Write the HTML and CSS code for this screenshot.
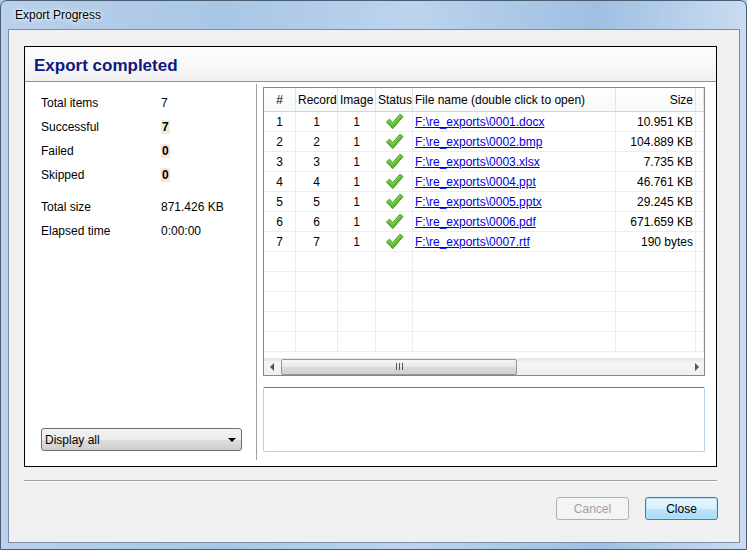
FILE: index.html
```html
<!DOCTYPE html>
<html>
<head>
  <title>Export Progress</title>
  <meta charset="utf-8">
  <link rel="stylesheet" href="styles.css">
</head>
<body>
  <div class="window">
    <div class="titlebar">Export Progress</div>
    <div class="client">
      <div class="panel">
        <div class="panel-header">Export completed</div>
        <div class="panel-body">
          <div class="summary">
            <div class="stats">
              <div class="stat"><span class="label">Total items</span><span class="value">7</span></div>
              <div class="stat"><span class="label">Successful</span><span class="value"><b class="ok">7</b></span></div>
              <div class="stat"><span class="label">Failed</span><span class="value"><b class="bad">0</b></span></div>
              <div class="stat"><span class="label">Skipped</span><span class="value"><b class="bad">0</b></span></div>
              <div class="stat gap"><span class="label">Total size</span><span class="value">871.426 KB</span></div>
              <div class="stat"><span class="label">Elapsed time</span><span class="value">0:00:00</span></div>
            </div>
            <div class="select">
              <span>Display all</span>
              <span class="select-arrow"></span>
            </div>
          </div>
          <div class="divider"></div>
          <div class="results">
            <div class="grid">
              <div class="grid-rows" id="rows">
                <div class="row head">
                  <div class="cell c">#</div>
                  <div class="cell c">Record</div>
                  <div class="cell c">Image</div>
                  <div class="cell c">Status</div>
                  <div class="cell">File name (double click to open)</div>
                  <div class="cell r">Size</div>
                  <div class="cell"></div>
                </div>
              </div>
              <div class="hscroll">
                <span class="arrow left"></span>
                <div class="thumb"><span class="grip"></span></div>
                <span class="arrow right"></span>
              </div>
            </div>
            <div class="messages"></div>
          </div>
        </div>
      </div>
      <div class="separator"></div>
      <div class="buttons">
        <button class="btn" disabled>Cancel</button>
        <button class="btn default">Close</button>
      </div>
    </div>
  </div>

  <script>
    var files = [
      ['0001.docx', '10.951 KB'],
      ['0002.bmp', '104.889 KB'],
      ['0003.xlsx', '7.735 KB'],
      ['0004.ppt', '46.761 KB'],
      ['0005.pptx', '29.245 KB'],
      ['0006.pdf', '671.659 KB'],
      ['0007.rtf', '190 bytes']
    ];

    var check = '<svg width="19" height="17" viewBox="0 0 19 17">' +
      '<path d="M1.5 9 L4.5 6.2 L7.6 9.8 L15 1.2 L18 3.6 L7.8 15.6 Z" fill="#5cbd2e" stroke="#3c8f1e" stroke-width="1" stroke-linejoin="round"/>' +
      '<path d="M3 9 L4.5 7.6 L7.6 11.2 L15.1 2.6 L16.3 3.5" fill="none" stroke="#9be06c" stroke-width="1"/>' +
      '</svg>';

    var rows = document.getElementById('rows');
    var html = '';
    for (var i = 0; i < 12; i++) {
      if (i < files.length) {
        var n = i + 1;
        html += '<div class="row">' +
          '<div class="cell c">' + n + '</div>' +
          '<div class="cell c">' + n + '</div>' +
          '<div class="cell c">1</div>' +
          '<div class="cell c icon">' + check + '</div>' +
          '<div class="cell"><a href="#">F:\\re_exports\\' + files[i][0] + '</a></div>' +
          '<div class="cell r">' + files[i][1] + '</div>' +
          '<div class="cell"></div>' +
          '</div>';
      } else {
        html += '<div class="row"><div class="cell"></div><div class="cell"></div><div class="cell"></div>' +
          '<div class="cell"></div><div class="cell"></div><div class="cell"></div><div class="cell"></div></div>';
      }
    }
    rows.insertAdjacentHTML('beforeend', html);
  </script>
</body>
</html>
```

FILE: styles.css
```css
* {
  box-sizing: border-box;
}
body {
  margin: 0;
  font-family: "Liberation Sans", Arial, sans-serif;
  font-size: 12px;
  color: #000;
  background: #a9c6e6;
}
.window {
  width: 747px;
  height: 550px;
  border: 1px solid #4c5d72;
  border-radius: 7px 7px 0 0;
  padding: 0 6px 6px 7px;
  background: linear-gradient(to right, #b9d1eb 0%, #a8c6e6 30%, #bcd4ee 55%, #9fbfe2 80%, #c9dcf1 100%);
  overflow: hidden;
}
.titlebar {
  height: 28px;
  line-height: 28px;
  padding-left: 7px;
  text-shadow: 0 0 6px #fff, 0 0 3px #fff;
}
.client {
  height: 514px;
  border: 1px solid #7d8ea6;
  background: #f0f0f0;
  padding: 16px 0 0 15px;
}
.panel {
  width: 693px;
  height: 421px;
  border: 1px solid #000;
  background: #fff;
  display: flex;
  flex-direction: column;
}
.panel-header {
  height: 35px;
  border-bottom: 1px solid #6d9acb;
  background: linear-gradient(#fefefe, #f1f1f1);
  padding-left: 9px;
  line-height: 38px;
  font-size: 17px;
  font-weight: bold;
  color: #0c1a82;
}
.panel-body {
  flex: 1;
  display: flex;
}
.summary {
  width: 231px;
  padding: 9px 0 15px 16px;
  display: flex;
  flex-direction: column;
}
.stat {
  display: flex;
  height: 24px;
  line-height: 24px;
}
.stat.gap {
  margin-top: 8px;
}
.label {
  width: 120px;
}
.value b {
  padding: 0 1px;
}
.ok {
  background: #e3f2df;
}
.bad {
  background: #fbe3d6;
}
.select {
  margin-top: auto;
  width: 201px;
  height: 23px;
  border: 1px solid #707070;
  border-radius: 3px;
  background: linear-gradient(#f3f3f3 0%, #ebebeb 50%, #dddddd 51%, #cfcfcf 100%);
  display: flex;
  align-items: center;
  justify-content: space-between;
  padding: 0 5px 0 3px;
}
.select-arrow {
  border-left: 4px solid transparent;
  border-right: 4px solid transparent;
  border-top: 4px solid #000;
}
.divider {
  width: 1px;
  background: #a0a0a0;
  margin: 2px 0 6px;
}
.results {
  padding: 5px 10px 0 6px;
  width: 458px;
}
.grid {
  width: 442px;
  height: 289px;
  border: 1px solid #828790;
  display: flex;
  flex-direction: column;
}
.grid-rows {
  flex: 1;
  overflow: hidden;
}
.row {
  display: grid;
  grid-template-columns: 32px 42px 38px 37px 203px 80px 1fr;
  height: 20px;
  border-bottom: 1px solid #ededed;
}
.row.head {
  height: 24px;
  border-bottom: 1px solid #d5d5d5;
  background: linear-gradient(#ffffff, #f6f7f8);
}
.cell {
  border-right: 1px solid #ececec;
  line-height: 19px;
  padding: 1px 2px 0;
  white-space: nowrap;
  overflow: hidden;
}
.head .cell {
  line-height: 22px;
  border-right-color: #e2e3e5;
}
.cell.c {
  text-align: center;
}
.cell.r {
  text-align: right;
}
.cell.icon svg {
  display: block;
  margin: 0 auto;
}
.cell a {
  color: #0000e8;
  text-decoration: underline;
}
.hscroll {
  height: 17px;
  background: linear-gradient(#e6e6e6, #f4f4f4 30%, #f0f0f0);
  display: flex;
  align-items: center;
  padding: 0 4px;
}
.arrow {
  width: 0;
  height: 0;
  border-top: 4px solid transparent;
  border-bottom: 4px solid transparent;
}
.arrow.left {
  border-right: 4px solid #555;
  margin-left: 2px;
}
.arrow.right {
  border-left: 4px solid #555;
  margin-left: auto;
  margin-right: 1px;
}
.thumb {
  margin-left: 7px;
  width: 236px;
  height: 16px;
  border: 1px solid #979797;
  border-radius: 2px;
  background: linear-gradient(#f6f6f6, #e9e9e9 50%, #dbdbdb 51%, #d0d0d0);
  display: flex;
  align-items: center;
  justify-content: center;
}
.grip {
  width: 7px;
  height: 7px;
  background: repeating-linear-gradient(to right, #555 0, #555 1px, transparent 1px, transparent 3px);
}
.messages {
  margin-top: 11px;
  width: 442px;
  height: 65px;
  border: 1px solid #b6d0e8;
  border-top-color: #4b7ea9;
  border-radius: 2px;
  background: #fff;
}
.separator {
  width: 693px;
  margin-top: 13px;
  border-top: 1px solid #a0a0a0;
  border-bottom: 1px solid #fff;
}
.buttons {
  width: 694px;
  margin-top: 15px;
  display: flex;
  justify-content: flex-end;
  gap: 16px;
}
.btn {
  width: 73px;
  height: 23px;
  font-family: "Liberation Sans", Arial, sans-serif;
  font-size: 12px;
  border: 1px solid #707070;
  border-radius: 3px;
  background: linear-gradient(#f2f2f2, #ebebeb 50%, #dddddd 51%, #cfcfcf);
  color: #000;
  padding: 0;
}
.btn:disabled {
  border-color: #adb2b5;
  background: #f4f4f4;
  color: #a0a0a0;
}
.btn.default {
  border-color: #3c7fb1;
  background: linear-gradient(#eaf6fd, #d9f0fc 50%, #bee6fd 51%, #a7d9f5);
  box-shadow: inset 0 0 0 1px #aee3fa;
}
```
